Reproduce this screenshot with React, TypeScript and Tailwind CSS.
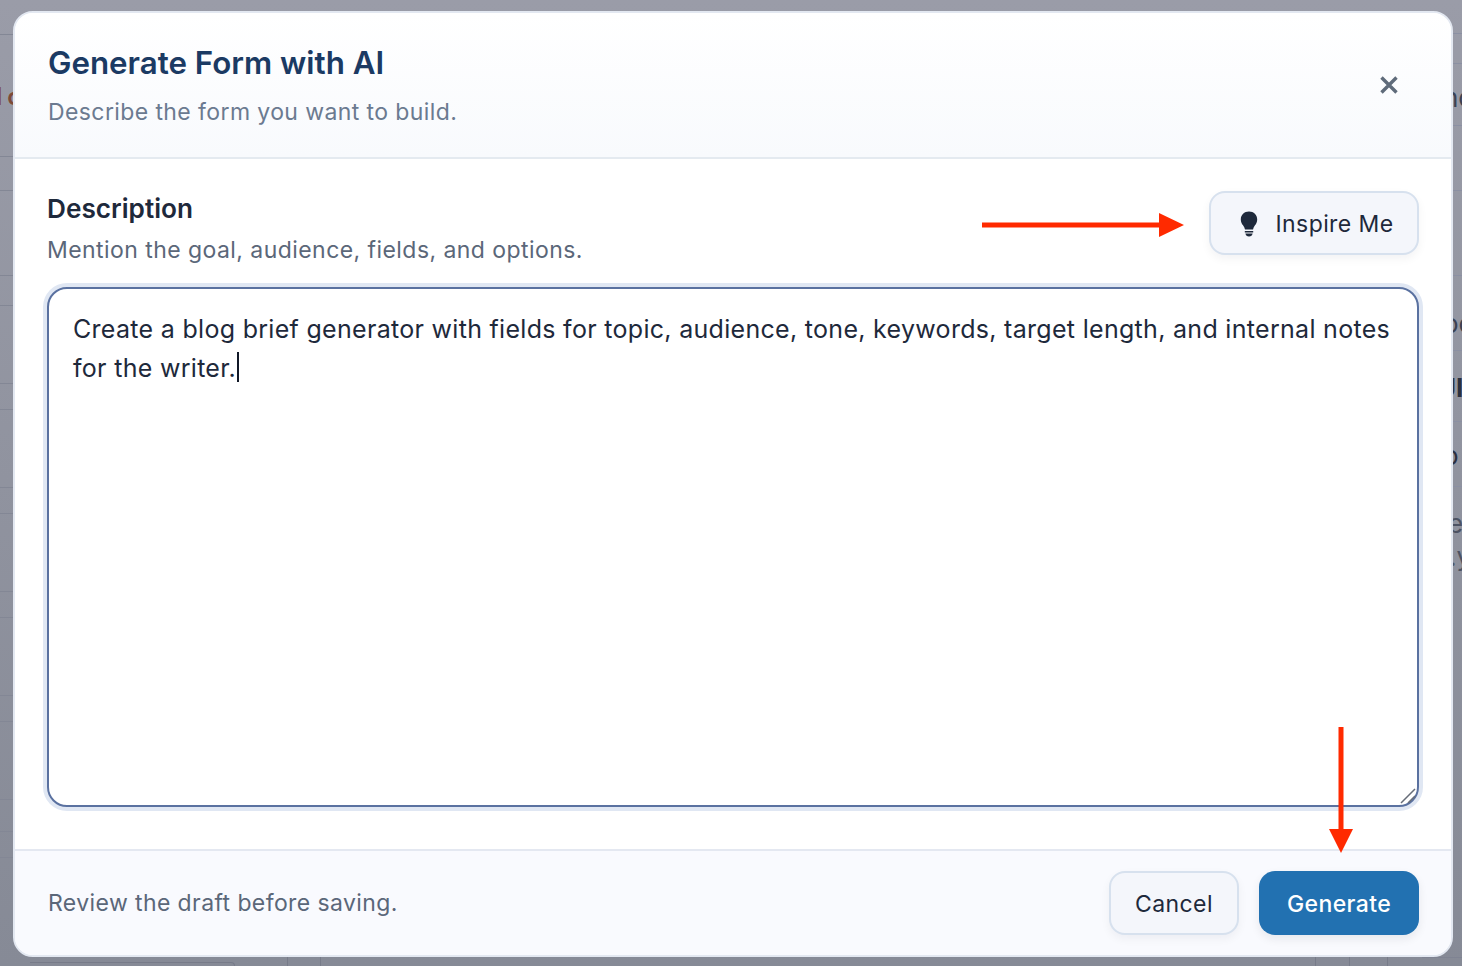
const leftRows = [
  'h-[34px]',
  'h-[85px]',
  'h-[30px]',
  'h-[78px]',
  'h-[26px]',
  'h-[78px]',
  'h-[26px]',
  'h-[78px]',
  'h-[26px]',
  'h-[78px]',
  'h-[26px]',
  'h-[78px]',
  'h-[32px]',
  'h-[26px]',
];

const BulbIcon = () => (
  <svg viewBox="0 0 18 26" className="h-[26px] w-[18px] fill-[#1e293b]">
    <path d="M9 0.5C4.2 0.5 0.8 4 0.8 8.4c0 2.6 1 4.3 2.2 5.9 1 1.3 1.7 2.6 2 4.2h8c.3-1.600 1-2.900 2-4.200 1.200-1.600 2.200-3.300 2.200-5.900C17.200 4 13.800 0.500 9 0.500z" />
    <path d="M4.800 20h8.400v1.600H4.800z" />
    <path d="M5.400 22.600h7.200c-.3 1.800-1.600 2.900-3.600 2.900s-3.300-1.100-3.600-2.900z" />
  </svg>
);

const Backdrop = () => (
  <div className="flex h-full">
    <div className="w-[30px] shrink-0">
      <div className="h-[35px] border-b border-[#838795]" />
      <div className="flex h-[122px] items-center gap-[5px] border-b border-[#838795] pt-[2px] text-[24px] font-semibold text-[#7d4a38]">
        <span className="-ml-[4px]">l</span>
        <span>c</span>
      </div>
      {leftRows.map((row, i) => (
        <div key={i} className={`${row} border-b border-[#838795]`} />
      ))}
    </div>

    <div className="flex flex-1 items-end">
      <div className="h-[4px] w-[205px] rounded-tr-[8px] border-r border-t border-[#777b89]" />
      <div className="h-[9px] w-[52px]" />
      <div className="h-[9px] w-[33px] border-l border-[#777b89]" />
      <div className="h-[9px] w-[995px] border-l border-[#777b89]" />
      <div className="h-[9px] w-[34px] border-l border-[#777b89]" />
      <div className="h-[9px] w-[38px] border-l border-[#777b89]" />
      <div className="h-[9px] border-l border-[#777b89]" />
    </div>

    <div className="w-[40px] shrink-0 text-[26px] leading-[30px] text-[#3c4252]">
      <div className="h-[34px] border-b border-[#8b90a3]" />
      <div className="h-[30px] border-b border-[#8b90a3]" />
      <div className="flex h-[62px] items-center border-b border-[#8b90a3] pl-[21px] pt-[6px]">nc</div>
      <div className="h-[65px] border-b border-[#8b90a3]" />
      <div className="h-[85px] border-b border-[#8b90a3]" />
      <div className="flex h-[75px] items-center border-b border-[#8b90a3] pl-[21px] pt-[22px]">oc</div>
      <div className="flex h-[71px] items-center border-b border-[#8b90a3] pl-[15px] pt-[4px] font-bold text-[#2b3040]">UI</div>
      <div className="flex h-[65px] items-center border-b border-[#8b90a3] pl-[21px] pt-[4px] text-[#2b3040]">o</div>
      <div className="flex h-[52px] items-end pl-[26px] text-[#4d5363]">e</div>
      <div className="flex h-[36px] items-center pl-[27px] text-[#4d5363]">.y</div>
      <div className="h-[383px] border-b border-[#7f8392]" />
    </div>
  </div>
);

export default function App() {
  return (
    <div className="relative h-[966px] w-[1462px] overflow-hidden bg-gradient-to-b from-[#9a9ca8] to-[#868a96] font-['Inter',sans-serif]">
      <Backdrop />

      <div className="absolute left-[13px] top-[11px] flex h-[946px] w-[1440px] flex-col overflow-hidden rounded-[20px] border-2 border-[#e3e8f1] bg-white">
        <header className="flex h-[146px] shrink-0 items-center justify-between border-b-2 border-[#e4eaf0] bg-gradient-to-b from-white to-[#f8fafd] pl-[33px] pr-[53px]">
          <div>
            <h1 className="text-[31.3px] leading-[40px] font-semibold text-[#1b3a63]">Generate Form with AI</h1>
            <p className="mt-[14px] text-[23px] leading-[30px] tracking-[0.4px] text-[#6b7a90]">
              Describe the form you want to build.
            </p>
          </div>
          <svg viewBox="0 0 18 18" className="h-[18px] w-[18px] stroke-[#5f6b7a]" strokeWidth="3.4">
            <path d="M1.500 1.500l15 15M16.500 1.500l-15 15" />
          </svg>
        </header>

        <main className="flex min-h-0 flex-1 flex-col px-[32px] pt-[32px]">
          <div className="flex items-start justify-between">
            <div>
              <h2 className="text-[26.2px] leading-[36px] font-semibold text-[#1e293b]">Description</h2>
              <p className="mt-[8px] text-[23px] leading-[30px] tracking-[0.44px] text-[#5b6779]">
                Mention the goal, audience, fields, and options.
              </p>
            </div>
            <button className="flex h-[64px] w-[210px] items-center justify-center gap-[18px] rounded-[16px] border-2 border-[#d7e1ee] bg-[#f4f6fb] pl-[5px] pt-[2px] text-[23px] tracking-[0.4px] text-[#1e293b] shadow-[0_4px_10px_rgba(15,23,42,0.05)]">
              <BulbIcon />
              Inspire Me
            </button>
          </div>

          <div className="relative mt-[22px] h-[520px] rounded-[20px] border-2 border-[#5a71a0] bg-white px-[24px] pt-[21px] text-[25px] leading-[39px] tracking-[0.3px] text-[#1e293b] shadow-[0_0_0_4px_#e0e7f3]">
            Create a blog brief generator with fields for topic, audience, tone, keywords, target length, and internal notes for the writer.
            <span className="ml-[1px] inline-block h-[30px] w-[2px] translate-y-[3px] bg-[#111827] align-top" />
            <svg viewBox="0 0 16 16" className="absolute bottom-[1px] right-[1px] h-[16px] w-[16px] fill-none stroke-[#666c78]" strokeWidth="1.500">
              <path d="M1 15L15 1M8 15l7-7" />
            </svg>
          </div>
        </main>

        <footer className="flex h-[106px] shrink-0 items-center justify-between border-t-2 border-[#e4e8f1] bg-[#f9fafe] pb-[1px] pl-[33px] pr-[32px]">
          <p className="pt-[2px] text-[23px] tracking-[0.4px] text-[#5b6779]">Review the draft before saving.</p>
          <div className="flex gap-[20px]">
            <button className="h-[64px] w-[130px] rounded-[16px] border-2 border-[#d7e1ee] bg-[#f4f6fb] pt-[3px] text-[23px] tracking-[0.4px] text-[#1e293b] shadow-[0_4px_10px_rgba(15,23,42,0.05)]">
              Cancel
            </button>
            <button className="h-[64px] w-[160px] rounded-[16px] bg-[#2271b1] pt-[3px] text-[23px] font-medium tracking-[0.4px] text-white shadow-[0_4px_10px_rgba(15,23,42,0.08)]">
              Generate
            </button>
          </div>
        </footer>
      </div>

      {/* red annotation arrows */}
      <svg viewBox="0 0 202 24" className="absolute left-[982px] top-[213px] h-[24px] w-[202px] fill-[#ff2a00]">
        <path d="M0 9.500h177V0l25 12-25 12v-9.500H0z" />
      </svg>
      <svg viewBox="0 0 24 126" className="absolute left-[1329px] top-[727px] h-[126px] w-[24px] fill-[#ff2a00]">
        <path d="M9.500 0h5v102H24l-12 24L0 102h9.500z" />
      </svg>
    </div>
  );
}
